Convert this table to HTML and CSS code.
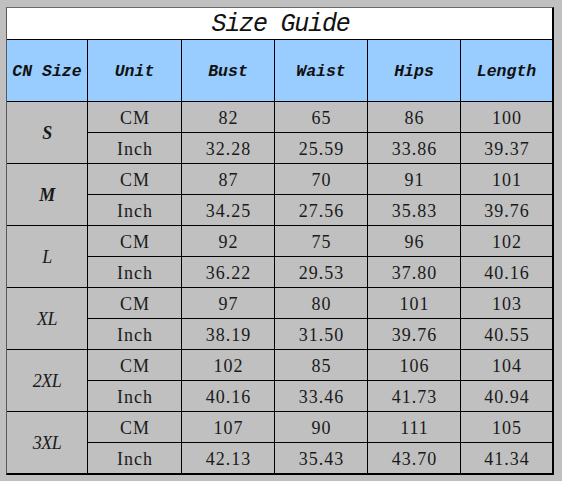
FILE: index.html
```html
<!DOCTYPE html>
<html>
<head>
<meta charset="utf-8">
<title>Size Guide</title>
<link rel="stylesheet" href="styles.css">
</head>
<body>
<div class="chart">
  <div class="title">Size Guide</div>

  <div class="head">CN Size</div>
  <div class="head">Unit</div>
  <div class="head">Bust</div>
  <div class="head">Waist</div>
  <div class="head">Hips</div>
  <div class="head">Length</div>

  <div class="size bold">S</div>
  <div class="cell">CM</div><div class="cell">82</div><div class="cell">65</div><div class="cell">86</div><div class="cell">100</div>
  <div class="cell">Inch</div><div class="cell">32.28</div><div class="cell">25.59</div><div class="cell">33.86</div><div class="cell">39.37</div>

  <div class="size bold">M</div>
  <div class="cell">CM</div><div class="cell">87</div><div class="cell">70</div><div class="cell">91</div><div class="cell">101</div>
  <div class="cell">Inch</div><div class="cell">34.25</div><div class="cell">27.56</div><div class="cell">35.83</div><div class="cell">39.76</div>

  <div class="size">L</div>
  <div class="cell">CM</div><div class="cell">92</div><div class="cell">75</div><div class="cell">96</div><div class="cell">102</div>
  <div class="cell">Inch</div><div class="cell">36.22</div><div class="cell">29.53</div><div class="cell">37.80</div><div class="cell">40.16</div>

  <div class="size">XL</div>
  <div class="cell">CM</div><div class="cell">97</div><div class="cell">80</div><div class="cell">101</div><div class="cell">103</div>
  <div class="cell">Inch</div><div class="cell">38.19</div><div class="cell">31.50</div><div class="cell">39.76</div><div class="cell">40.55</div>

  <div class="size">2XL</div>
  <div class="cell">CM</div><div class="cell">102</div><div class="cell">85</div><div class="cell">106</div><div class="cell">104</div>
  <div class="cell">Inch</div><div class="cell">40.16</div><div class="cell">33.46</div><div class="cell">41.73</div><div class="cell">40.94</div>

  <div class="size">3XL</div>
  <div class="cell">CM</div><div class="cell">107</div><div class="cell">90</div><div class="cell">111</div><div class="cell">105</div>
  <div class="cell">Inch</div><div class="cell">42.13</div><div class="cell">35.43</div><div class="cell">43.70</div><div class="cell">41.34</div>
</div>
</body>
</html>
```
FILE: styles.css
```css
html, body {
  margin: 0;
  background: #c0c0c0;
}
body {
  padding: 7px 0 0 6px;
  width: 562px;
  height: 481px;
  box-sizing: border-box;
  overflow: hidden;
}
.chart {
  display: grid;
  grid-template-columns: 80px 93px 92px 92px 92px 91px;
  grid-template-rows: 31px 61px repeat(12, 30px);
  gap: 1px;
  width: max-content;
  background: #000;
  border-left: 1px solid #5a5a5a;
  border-top: 1px solid #6a6a6a;
  border-right: 2px solid #000;
  border-bottom: 2px solid #000;
}
.chart > div {
  display: flex;
  align-items: center;
  justify-content: center;
  background: #c0c0c0;
}
.title {
  grid-column: 1 / -1;
  background: #ffffff !important;
  font-family: "Liberation Mono", monospace;
  font-style: italic;
  font-size: 25px;
  letter-spacing: -1.2px;
  color: #111;
  padding: 2px 0 0 2px;
}
.head {
  background: #99ccff !important;
  font-family: "Liberation Mono", monospace;
  font-style: italic;
  font-weight: bold;
  font-size: 16.5px;
  color: #111;
  padding-top: 2px;
}
.size {
  grid-row: span 2;
  font-family: "Liberation Serif", serif;
  font-style: italic;
  font-size: 18px;
  color: #1a1a1a;
  letter-spacing: -0.5px;
  padding-top: 1px;
}
.size.bold {
  font-weight: bold;
}
.cell {
  font-family: "Liberation Serif", serif;
  font-size: 18px;
  letter-spacing: 1px;
  color: #1a1a1a;
  padding: 2px 0 0 1px;
}
```
